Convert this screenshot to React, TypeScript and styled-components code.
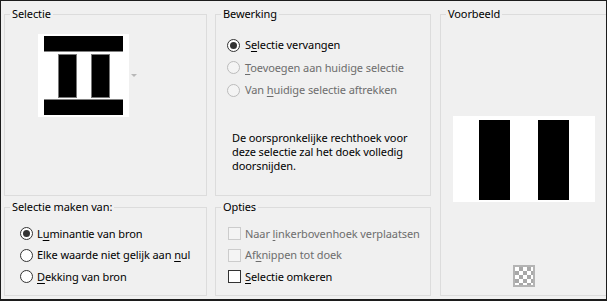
import React from 'react'
import styled, { createGlobalStyle } from 'styled-components'

const GlobalStyle = createGlobalStyle`
    html, body {
        margin: 0;
        padding: 0;
        background: #f0f0f0;
    }
    body {
        font-family: 'Noto Sans', 'Open Sans', sans-serif;
        font-size: 11px;
        letter-spacing: -0.1px;
        color: #000;
    }
`

const Window = styled.div`
    width: 607px;
    height: 301px;
    box-sizing: border-box;
    border: 1px solid #1c1c1c;
    border-bottom-width: 2px;
    background: #f0f0f0;
    display: grid;
    grid-template-columns: 203px 8px 216px 9px 166px;
    grid-template-rows: 190px 3px 97px;
    padding: 5px 0 3px 3px;
`

const GroupBox = styled.fieldset<{ $col: string; $row: string; $openRight?: boolean }>`
    grid-column: ${(p) => p.$col};
    grid-row: ${(p) => p.$row};
    margin: 0;
    padding: 0;
    min-width: 0;
    border: 1px solid #dcdcdc;
    ${(p) => (p.$openRight ? 'border-right: 0;' : '')}
    display: flex;
    flex-direction: column;
`

const Legend = styled.legend`
    margin-left: 5px;
    padding: 0 2px;
    font-size: 11px;
    line-height: 16px;
`

const ThumbRow = styled.div`
    display: flex;
    align-items: center;
    gap: 2px;
    padding: 12px 0 0 33px;
`

const DropArrow = styled.span`
    width: 0;
    height: 0;
    border-left: 3px solid transparent;
    border-right: 3px solid transparent;
    border-top: 3px solid #b8b8b8;
`

const OptionList = styled.div<{ $top: number; $left: number; $rowHeight: number }>`
    display: flex;
    flex-direction: column;
    padding: ${(p) => p.$top}px 0 0 ${(p) => p.$left}px;
    > * {
        height: ${(p) => p.$rowHeight}px;
    }
`

const OptionRow = styled.label<{ $disabled?: boolean; $gap?: number }>`
    display: flex;
    align-items: center;
    gap: ${(p) => p.$gap ?? 5}px;
    white-space: nowrap;
    line-height: 16px;
    color: ${(p) => (p.$disabled ? '#6d6d6d' : '#000')};
    u {
        text-underline-offset: 2px;
    }
`

const RadioCircle = styled.span<{ $checked?: boolean; $disabled?: boolean }>`
    flex: none;
    width: 13px;
    height: 13px;
    box-sizing: border-box;
    border-radius: 50%;
    border: 1px solid ${(p) => (p.$disabled ? '#bcbcbc' : '#333')};
    background: ${(p) => (p.$disabled ? '#f4f4f4' : '#fff')};
    display: flex;
    align-items: center;
    justify-content: center;
    &::after {
        content: '';
        width: 7px;
        height: 7px;
        border-radius: 50%;
        background: #333;
        display: ${(p) => (p.$checked ? 'block' : 'none')};
    }
`

const CheckBox = styled.span<{ $disabled?: boolean }>`
    flex: none;
    width: 13px;
    height: 13px;
    box-sizing: border-box;
    border: 1px solid ${(p) => (p.$disabled ? '#cccccc' : '#333')};
    background: ${(p) => (p.$disabled ? '#f4f4f4' : '#fff')};
`

const Note = styled.p`
    margin: 29px 0 0 16px;
    line-height: 14px;
`

const PreviewArea = styled.div`
    flex: 1;
    display: flex;
    flex-direction: column;
    align-items: center;
    padding: 94px 0 8px 0;
`

const CheckerButton = styled.div`
    margin-top: auto;
    width: 22px;
    height: 22px;
    box-sizing: border-box;
    border: 2px solid #b4b4b4;
    background-color: #fff;
    background-image: conic-gradient(#a8a8a8 25%, #fff 0 50%, #a8a8a8 0 75%, #fff 0);
    background-size: 8px 8px;
    background-position: 0 0;
`

const SourceThumb = () => (
    <svg width="91" height="83" viewBox="0 0 91 83">
        <rect width="91" height="83" fill="#fff" />
        <rect x="6" y="2" width="79" height="15" fill="#000" />
        <rect x="6" y="17" width="79" height="1" fill="#808080" />
        <rect x="20.5" y="20.5" width="18" height="43" fill="#000" stroke="#777" />
        <rect x="53.5" y="20.5" width="18" height="43" fill="#000" stroke="#777" />
        <rect x="6" y="65" width="79" height="1" fill="#808080" />
        <rect x="6" y="66" width="79" height="15" fill="#000" />
    </svg>
)

const ResultPreview = () => (
    <svg width="142" height="86" viewBox="0 0 142 86">
        <rect width="142" height="86" fill="#fff" />
        <rect x="26" y="4" width="31" height="80" fill="#000" />
        <rect x="85" y="4" width="31" height="80" fill="#000" />
    </svg>
)

const App: React.FC = () => {
    return (
        <>
            <GlobalStyle />
            <Window>
                <GroupBox $col="1" $row="1">
                    <Legend>Selectie</Legend>
                    <ThumbRow>
                        <SourceThumb />
                        <DropArrow />
                    </ThumbRow>
                </GroupBox>

                <GroupBox $col="3" $row="1">
                    <Legend>Bewerking</Legend>
                    <OptionList $top={12} $left={11} $rowHeight={22.5}>
                        <OptionRow>
                            <RadioCircle $checked />
                            <span>
                                S<u>e</u>lectie vervangen
                            </span>
                        </OptionRow>
                        <OptionRow $disabled>
                            <RadioCircle $disabled />
                            <span>
                                <u>T</u>oevoegen aan huidige selectie
                            </span>
                        </OptionRow>
                        <OptionRow $disabled>
                            <RadioCircle $disabled />
                            <span>
                                Van <u>h</u>uidige selectie aftrekken
                            </span>
                        </OptionRow>
                    </OptionList>
                    <Note>
                        De oorspronkelijke rechthoek voor
                        <br />
                        deze selectie zal het doek volledig
                        <br />
                        doorsnijden.
                    </Note>
                </GroupBox>

                <GroupBox $col="5" $row="1 / 4" $openRight>
                    <Legend>Voorbeeld</Legend>
                    <PreviewArea>
                        <ResultPreview />
                        <CheckerButton />
                    </PreviewArea>
                </GroupBox>

                <GroupBox $col="1" $row="3">
                    <Legend>Selectie maken van:</Legend>
                    <OptionList $top={8} $left={15} $rowHeight={21.5}>
                        <OptionRow $gap={4}>
                            <RadioCircle $checked />
                            <span>
                                L<u>u</u>minantie van bron
                            </span>
                        </OptionRow>
                        <OptionRow $gap={4}>
                            <RadioCircle />
                            <span>
                                Elke waarde niet gelijk aan <u>n</u>ul
                            </span>
                        </OptionRow>
                        <OptionRow $gap={4}>
                            <RadioCircle />
                            <span>
                                <u>D</u>ekking van bron
                            </span>
                        </OptionRow>
                    </OptionList>
                </GroupBox>

                <GroupBox $col="3" $row="3">
                    <Legend>Opties</Legend>
                    <OptionList $top={8} $left={12} $rowHeight={21.5}>
                        <OptionRow $disabled $gap={4}>
                            <CheckBox $disabled />
                            <span>
                                Naar <u>l</u>inkerbovenhoek verplaatsen
                            </span>
                        </OptionRow>
                        <OptionRow $disabled $gap={4}>
                            <CheckBox $disabled />
                            <span>
                                Af<u>k</u>nippen tot doek
                            </span>
                        </OptionRow>
                        <OptionRow $gap={4}>
                            <CheckBox />
                            <span>
                                <u>S</u>electie omkeren
                            </span>
                        </OptionRow>
                    </OptionList>
                </GroupBox>
            </Window>
        </>
    )
}

export default App
